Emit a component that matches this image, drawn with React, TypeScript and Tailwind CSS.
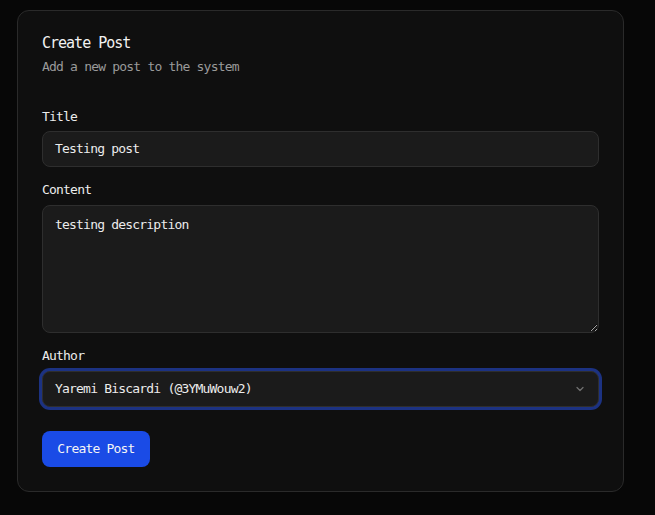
import React from "react";

const mono = "font-['DejaVu_Sans_Mono','Liberation_Mono',monospace]";

export default function App() {
  return (
    <div className={`min-h-[515px] w-full bg-[#070707] pl-[17px] pt-[10px] ${mono}`}>
      <div className="w-[607px] rounded-[12px] border border-[#2a2a2a] bg-[#0f0f0f] p-6">
        <div className="flex flex-col gap-[6px]">
          <h2 className="text-[15px] leading-[16px] tracking-[-1px] text-[#f2f2f2]">Create Post</h2>
          <p className="text-[13px] leading-[20px] tracking-[-0.8px] text-[#9a9a9a]">Add a new post to the system</p>
        </div>
        <div className="mt-[33px] flex flex-col">
          <label className="text-[13px] leading-[14px] tracking-[-0.8px] text-[#ececec]">Title</label>
          <div className="mt-[7px] flex h-[36px] items-center rounded-[8px] border border-[#2e2e2e] bg-[#1b1b1b] px-3 text-[13px] tracking-[-0.8px] text-[#ececec]">
            Testing post
          </div>
          <label className="mt-[16px] text-[13px] leading-[14px] tracking-[-0.8px] text-[#ececec]">Content</label>
          <textarea
            defaultValue="testing description"
            className="mt-2 h-[128px] w-full rounded-[8px] border border-[#2e2e2e] bg-[#1b1b1b] px-3 py-[9px] text-[13px] leading-[20px] tracking-[-0.8px] text-[#ececec] outline-none"
          />
          <label className="mt-[16px] text-[13px] leading-[14px] tracking-[-0.8px] text-[#ececec]">Author</label>
          <div className="mt-2 flex h-[36px] items-center justify-between rounded-[8px] border border-[#2e2e2e] bg-[#1b1b1b] px-3 text-[13px] tracking-[-0.8px] text-[#ececec] shadow-[0_0_0_3px_#1c3282]">
            <span>Yaremi Biscardi (@3YMuWouw2)</span>
            <svg width="12" height="12" viewBox="0 0 24 24" fill="none" stroke="#707070" strokeWidth="2.5" strokeLinecap="round" strokeLinejoin="round">
              <path d="m6 9 6 6 6-6" />
            </svg>
          </div>
          <div className="mt-[24px]">
            <button className="h-[36px] w-[108px] rounded-[8px] bg-[#1a4be6] text-[13px] tracking-[-0.8px] text-[#f5f5f5]">
              Create Post
            </button>
          </div>
        </div>
      </div>
    </div>
  );
}
